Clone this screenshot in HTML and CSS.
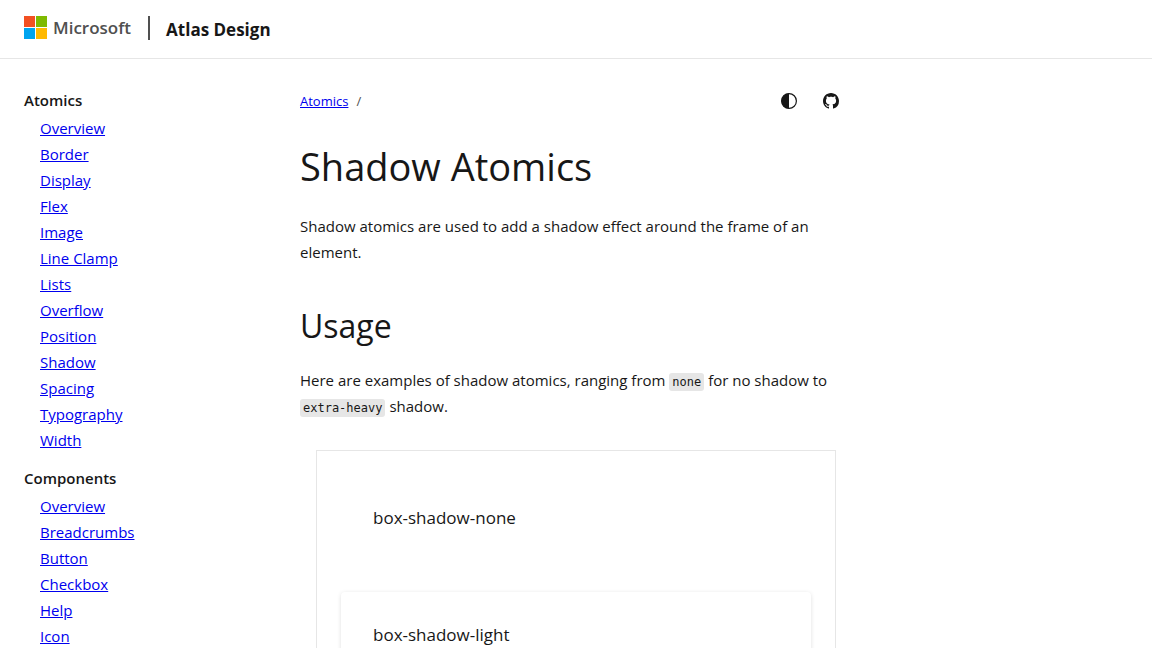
FILE: index.html
```html
<!DOCTYPE html>
<html lang="en">
<head>
<meta charset="utf-8">
<meta name="viewport" content="width=device-width, initial-scale=1">
<title>Shadow Atomics - Atlas Design</title>
<link rel="stylesheet" href="styles.css">
</head>
<body>
<header class="site-header">
  <a class="brand" href="#microsoft">
    <svg class="brand-mark" viewBox="0 0 23 23" aria-hidden="true"><path fill="#f25022" d="M0 0h11v11H0z"/><path fill="#7fba00" d="M12 0h11v11H12z"/><path fill="#00a4ef" d="M0 12h11v11H0z"/><path fill="#ffb900" d="M12 12h11v11H12z"/></svg>
    <span>Microsoft</span>
  </a>
  <a class="site-name" href="#home">Atlas Design</a>
</header>
<div class="layout">
  <nav class="sidebar" aria-label="Documentation">
    <section class="nav-group">
      <h2 class="nav-title">Atomics</h2>
      <ul class="nav-list">
        <li><a href="#overview">Overview</a></li>
        <li><a href="#border">Border</a></li>
        <li><a href="#display">Display</a></li>
        <li><a href="#flex">Flex</a></li>
        <li><a href="#image">Image</a></li>
        <li><a href="#line-clamp">Line Clamp</a></li>
        <li><a href="#lists">Lists</a></li>
        <li><a href="#overflow">Overflow</a></li>
        <li><a href="#position">Position</a></li>
        <li><a href="#shadow">Shadow</a></li>
        <li><a href="#spacing">Spacing</a></li>
        <li><a href="#typography">Typography</a></li>
        <li><a href="#width">Width</a></li>
      </ul>
    </section>
    <section class="nav-group">
      <h2 class="nav-title">Components</h2>
      <ul class="nav-list">
        <li><a href="#components">Overview</a></li>
        <li><a href="#breadcrumbs">Breadcrumbs</a></li>
        <li><a href="#button">Button</a></li>
        <li><a href="#checkbox">Checkbox</a></li>
        <li><a href="#help">Help</a></li>
        <li><a href="#icon">Icon</a></li>
      </ul>
    </section>
  </nav>
  <main class="content">
    <div class="toolbar">
      <nav class="breadcrumbs" aria-label="Breadcrumbs"><a href="#atomics">Atomics</a><span class="slash">/</span></nav>
      <div class="actions">
        <button class="icon-button" type="button" aria-label="Change theme"><svg viewBox="0 0 16 16" aria-hidden="true"><circle cx="8" cy="8" r="7.4" fill="none" stroke="currentColor" stroke-width="1.2"/><path fill="currentColor" d="M8 .5a7.500 7.500 0 0 0 0 15z"/></svg></button>
        <a class="icon-button" href="#github" aria-label="GitHub"><svg viewBox="0 0 16 16" aria-hidden="true"><path fill="currentColor" d="M8 0C3.580 0 0 3.580 0 8c0 3.540 2.290 6.530 5.470 7.590.4.070.55-.17.55-.38 0-.19-.01-.82-.01-1.490-2.010.37-2.530-.49-2.690-.94-.09-.23-.48-.94-.82-1.130-.28-.15-.68-.52-.01-.53.63-.01 1.080.58 1.230.82.72 1.210 1.870.87 2.330.66.070-.52.28-.87.51-1.070-1.780-.2-3.640-.89-3.640-3.950 0-.87.31-1.590.82-2.150-.08-.2-.36-1.020.08-2.120 0 0 .67-.21 2.200.82.64-.18 1.320-.27 2-.27s1.360.09 2 .27c1.530-1.040 2.200-.82 2.200-.82.44 1.100.16 1.920.08 2.120.51.56.82 1.270.82 2.150 0 3.070-1.870 3.750-3.650 3.950.29.25.54.73.54 1.480 0 1.070-.01 1.930-.01 2.200 0 .21.15.46.55.38A8.010 8.010 0 0 0 16 8c0-4.420-3.580-8-8-8z"/></svg></a>
      </div>
    </div>
    <h1 class="page-title">Shadow Atomics</h1>
    <p class="text">Shadow atomics are used to add a shadow effect around the frame of an element.</p>
    <h2 class="section-title">Usage</h2>
    <p class="text">Here are examples of shadow atomics, ranging from <code class="code">none</code> for no shadow to <code class="code">extra-heavy</code> shadow.</p>
    <div class="example">
      <div class="box">box-shadow-none</div>
      <div class="box box-light">box-shadow-light</div>
    </div>
  </main>
</div>
</body>
</html>
```
FILE: styles.css
```css
* {
  box-sizing: border-box;
}

body {
  margin: 0;
  background: #fff;
  color: #171717;
  font: 15px/26px "Open Sans", "Noto Sans", sans-serif;
}

h1, h2, p, ul {
  margin: 0;
  padding: 0;
}

.site-header {
  display: flex;
  align-items: flex-start;
  padding: 16px 24px 18px;
  border-bottom: 1px solid #e6e6e6;
}

.brand {
  display: flex;
  align-items: flex-start;
  gap: 6px;
  color: #505050;
  font-size: 17px;
  font-weight: 600;
  line-height: 24px;
  text-decoration: none;
}

.brand-mark {
  width: 23px;
  height: 23px;
}

.site-name {
  height: 24px;
  margin-left: 17px;
  padding-left: 16px;
  border-left: 2px solid #505050;
  color: #171717;
  font-size: 17px;
  font-weight: 700;
  line-height: 28px;
  text-decoration: none;
}

.layout {
  display: grid;
  grid-template-columns: 252px minmax(0, 540px);
  gap: 24px;
  height: calc(100vh - 59px);
  padding: 28px 24px 0;
  overflow: hidden;
}

.nav-group {
  margin-bottom: 12px;
}

.nav-title {
  margin-bottom: 2px;
  font-size: 15px;
  font-weight: 600;
  line-height: 26px;
}

.nav-list {
  padding-left: 16px;
  list-style: none;
}

a {
  color: #0000ee;
}

.toolbar {
  display: flex;
  align-items: center;
  justify-content: space-between;
  padding-right: 1px;
}

.breadcrumbs {
  display: flex;
  gap: 8px;
  font-size: 13px;
}

.slash {
  color: #505050;
}

.actions {
  display: flex;
  gap: 26px;
}

.icon-button {
  display: flex;
  width: 16px;
  height: 28px;
  padding: 0;
  align-items: center;
  border: 0;
  background: none;
  color: #171717;
}

.icon-button svg {
  width: 16px;
  height: 16px;
}

.page-title {
  margin: 25px 0 21px;
  font-size: 38px;
  font-weight: 400;
  line-height: 52px;
}

.section-title {
  margin: 37px 0 17px;
  font-size: 32px;
  font-weight: 400;
  line-height: 48px;
}

.code {
  padding: 2px 3px;
  border-radius: 3px;
  background: #e6e6e6;
  font: 12px/16px "DejaVu Sans Mono", monospace;
}

.example {
  margin: 31px 4px 0 16px;
  padding: 24px;
  border: 1px solid #e6e6e6;
}

.box {
  margin-bottom: 24px;
  padding: 29px 32px 36px;
  border-radius: 4px;
  font-size: 17px;
  line-height: 28px;
}

.box-light {
  box-shadow: 0 1px 4px rgba(0, 0, 0, 0.13);
}
```
